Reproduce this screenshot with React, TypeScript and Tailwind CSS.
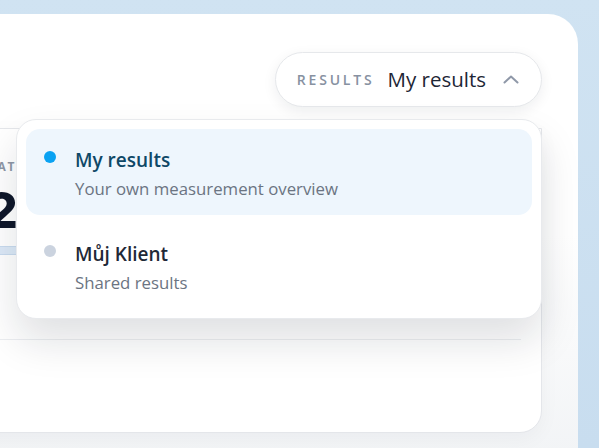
import { FunctionComponent } from "react";

interface IOption {
    title: string
    subtitle: string
    active?: boolean
}

const options: IOption[] = [
    { title: "My results", subtitle: "Your own measurement overview", active: true },
    { title: "Můj Klient", subtitle: "Shared results" },
];

const OptionRow: FunctionComponent<{ el: IOption }> = ({ el }) => {
    return (
        <div className={`h-[86px] flex items-start gap-[19px] pl-[18px] pr-4 pt-[17px] rounded-[14px] ${el.active ? "bg-[#eef6fd]" : "bg-white"}`}>
            <span className={`mt-[5px] w-3 h-3 rounded-full shrink-0 ${el.active ? "bg-[#0aa2f2]" : "bg-[#cbd3df]"}`} />
            <div className="flex flex-col gap-[3px]">
                <span className={`text-[19px] leading-[28px] font-semibold ${el.active ? "text-[#0e4867]" : "text-[#1f2937]"}`}>{el.title}</span>
                <span className="text-[16.8px] leading-[24px] text-[#6b7482]">{el.subtitle}</span>
            </div>
        </div>
    )
}

export default function App() {
    return (
        <div className="h-[448px] overflow-hidden bg-gradient-to-b from-[#d0e3f2] to-[#c8ddef] pt-[14px] pr-[21px] font-['Open_Sans',sans-serif]">
            <div className="-ml-[60px] h-[440px] rounded-tr-[30px] bg-gradient-to-b from-white via-white to-[#f2f4f6] pt-[38px] pr-[36px] pl-[24px]">
                {/* header */}
                <div className="flex justify-end">
                    <div className="relative">
                        <button className="flex items-center h-[55px] pl-[21px] pr-[22px] rounded-full bg-white border border-[#e6e8eb] shadow-[0_4px_14px_rgba(15,23,42,0.07)]">
                            <span className="text-[14px] font-semibold tracking-[0.2em] text-[#8791a1]">RESULTS</span>
                            <span className="ml-[13px] text-[20.5px] font-medium text-[#1e2635]">My results</span>
                            <svg className="ml-[17px]" width="16" height="9" viewBox="0 0 16 9" fill="none">
                                <path d="M1.5 7.5 L8 1.5 L14.5 7.5" stroke="#8f98a8" strokeWidth="2" strokeLinecap="round" strokeLinejoin="round" />
                            </svg>
                        </button>
                        <div className="absolute right-0 top-full mt-3 z-10 w-[526px] rounded-[20px] bg-white border border-[#e8eaed] p-[9px] flex flex-col gap-2 shadow-[0_22px_40px_rgba(15,23,42,0.13)]">
                            {options.map((el) => (
                                <OptionRow key={el.title} el={el} />
                            ))}
                        </div>
                    </div>
                </div>

                {/* card behind the menu */}
                <div className="mt-[21px] h-[305px] bg-white border border-[#e4e6ea] rounded-br-[22px] shadow-[0_6px_20px_rgba(15,23,42,0.04)] flex flex-col">
                    <div className="h-[211px] pl-[15px] pt-[30px] border-b border-[#eceef1] mr-[20px]">
                        <div className="flex flex-col w-[120px]">
                            <span className="text-[12px] font-bold tracking-[0.16em] text-[#8e97a6] leading-[16px]">STATUS</span>
                            <span className="mt-[10px] ml-[6px] text-[50px] font-extrabold leading-[50px] text-[#0f172a] font-['Inter',sans-serif]">2</span>
                            <div className="mt-[11px] h-[9px] w-[110px] rounded-full bg-[#dce9f7] border border-[#c9dbef]" />
                            <span className="mt-[20px] text-[14px] font-bold text-[#8e97a6] leading-[16px]">18</span>
                        </div>
                    </div>
                </div>
            </div>
        </div>
    );
}
